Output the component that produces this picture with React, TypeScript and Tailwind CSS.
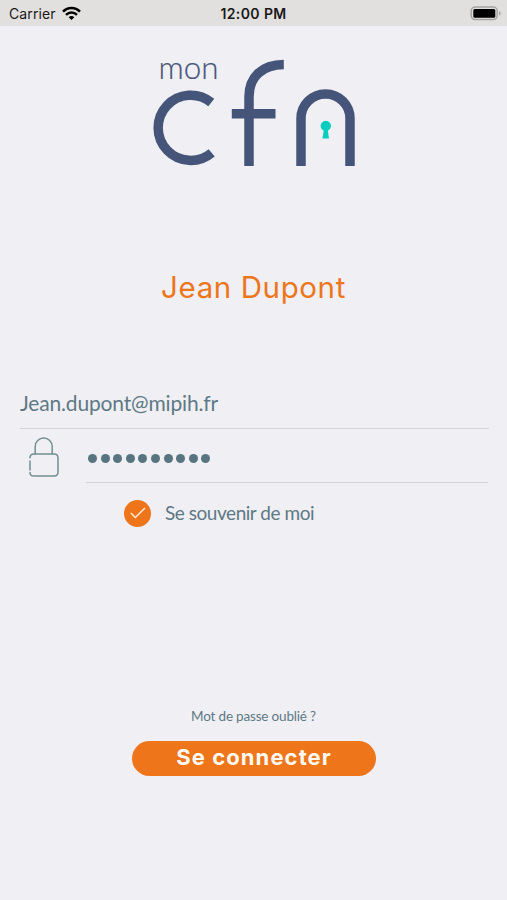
import React from "react";

function StatusBar() {
  return (
    <header className="grid h-[26px] grid-cols-3 items-center bg-[#e2e0df] pl-[9px] pr-[6px] pt-[2px] font-['Inter',sans-serif] text-[#191919]">
      <div className="flex items-center gap-[6px]">
        <span className="text-[14px] leading-5 tracking-[0.1px]">Carrier</span>
        <svg className="mb-[2px] h-[15px] w-[19px]" viewBox="0 0 19 15" fill="none" stroke="#000" strokeWidth="2.5">
          <path d="M1 5.7C5.7.7 13.3.7 18 5.7" />
          <path d="M4 8.9c3.1-3.1 7.9-3.1 11 0" />
          <path d="M9.5 14 6.7 11.2c1.5-1.5 4.1-1.5 5.6 0Z" fill="#000" stroke="none" />
        </svg>
      </div>
      <span className="-ml-[3px] text-center text-[14px] font-semibold leading-5 tracking-[0.4px]">12:00 PM</span>
      <svg className="mb-[2px] h-[15px] w-[31px] justify-self-end" viewBox="0 0 31 15">
        <rect x="1.2" y="1" width="26" height="12.6" rx="4" fill="#e2e0df" stroke="#a5a4a3" strokeWidth="1.5" />
        <rect x="3.3" y="3" width="22" height="8.8" rx="1.5" fill="#000" />
        <path d="M29 5.2c2.2.8 2.2 3.5 0 4.3Z" fill="#a5a4a3" />
      </svg>
    </header>
  );
}

function Logo() {
  return (
    <svg className="h-[131px] w-[217px]" viewBox="145 40 217 131" fill="none" stroke="#455579" strokeWidth="9.5" role="img" aria-label="mon cfn">
      <text x="158.6" y="78.5" fill="#455579" stroke="#455579" strokeWidth="0.2" fontFamily="Lato" fontWeight="300" fontSize="31" textLength="60" lengthAdjust="spacingAndGlyphs">mon</text>
      <path d="M211.3 102.5A32.6 32.6 0 1 0 211.7 152.8" />
      <path d="M249 166V97C249 77 262 64.4 283.8 64.4M231.8 113.8h43.7" />
      <path d="M301 166v-47.5a24.5 24.5 0 0 1 49 0V166" />
      <path d="M323.7 130.7a5.2 5.2 0 1 1 4.2 0l1.1 7.7h-6.6Z" fill="#0bcdbd" stroke="none" />
    </svg>
  );
}

function LockIcon() {
  return (
    <svg className="h-[42px] w-[32px]" viewBox="28 436 32 42" fill="none" stroke="#719092" strokeWidth="1.5" strokeLinecap="round">
      <path d="M35.2 454v-7.5a8.5 8.5 0 0 1 17 0v7.5" />
      <path d="M30 457.8c0-2.4 1.6-3.8 4-3.8h20c2.4 0 4 1.6 4 4v14c0 2.6-1.6 4-4 4H34c-2.7 0-4-1.2-4-3.6M30 461v9" />
    </svg>
  );
}

export default function App() {
  return (
    <main className="flex h-[900px] w-[507px] flex-col overflow-hidden bg-[#efeff4] font-['Lato',sans-serif] text-[#5e7984]">
      <StatusBar />
      <div className="mt-[14px] flex justify-center pr-px"><Logo /></div>
      <h1 className="mt-[96px] text-center font-['Inter',sans-serif] text-[29.5px] font-normal leading-[40px] tracking-[0.6px] text-[#ed761b]">Jean Dupont</h1>
      <form className="mt-[82px] flex flex-col" onSubmit={(e) => e.preventDefault()}>
        <div className="ml-5 mr-[18px] flex h-[40px] items-center border-b border-[#d3d4da] pb-[11px]">
          <span className="text-[21px] leading-[28px] tracking-[-0.17px]">Jean.dupont@mipih.fr</span>
        </div>
        <div className="ml-[28px] mr-[19px] flex h-[54px]">
          <div className="pt-[7px]"><LockIcon /></div>
          <div className="ml-[26px] flex grow items-center gap-[3.6px] border-b border-[#d3d4da] pl-[2px] pt-[5px]">
            {Array.from({ length: 10 }, (_, i) => <span key={i} className="size-[9px] shrink-0 rounded-full bg-[#577480]" />)}
          </div>
        </div>
        <label className="ml-[124px] mt-[16px] flex h-[28px] items-center gap-[14px]">
          <span className="flex size-[27px] items-center justify-center rounded-full bg-[#ee751a]">
            <svg className="h-[12px] w-[16px]" viewBox="0 0 16 12" fill="none" stroke="#fff0df" strokeWidth="1.4"><path d="m1 6 4.3 4.5L15 1" /></svg>
          </span>
          <span className="text-[19px] leading-6 tracking-[-0.46px]">Se souvenir de moi</span>
        </label>
        <a className="mt-[179px] text-center text-[13.5px] leading-5 tracking-[-0.18px]">Mot de passe oublié ?</a>
        <button className="ml-[132px] mt-[15px] h-[35px] w-[244px] rounded-full bg-[#ee751a] pb-[2px] font-['Inter',sans-serif] text-[22px] font-bold leading-[33px] tracking-[1.1px] text-[#fffaf3]">Se connecter</button>
      </form>
    </main>
  );
}
